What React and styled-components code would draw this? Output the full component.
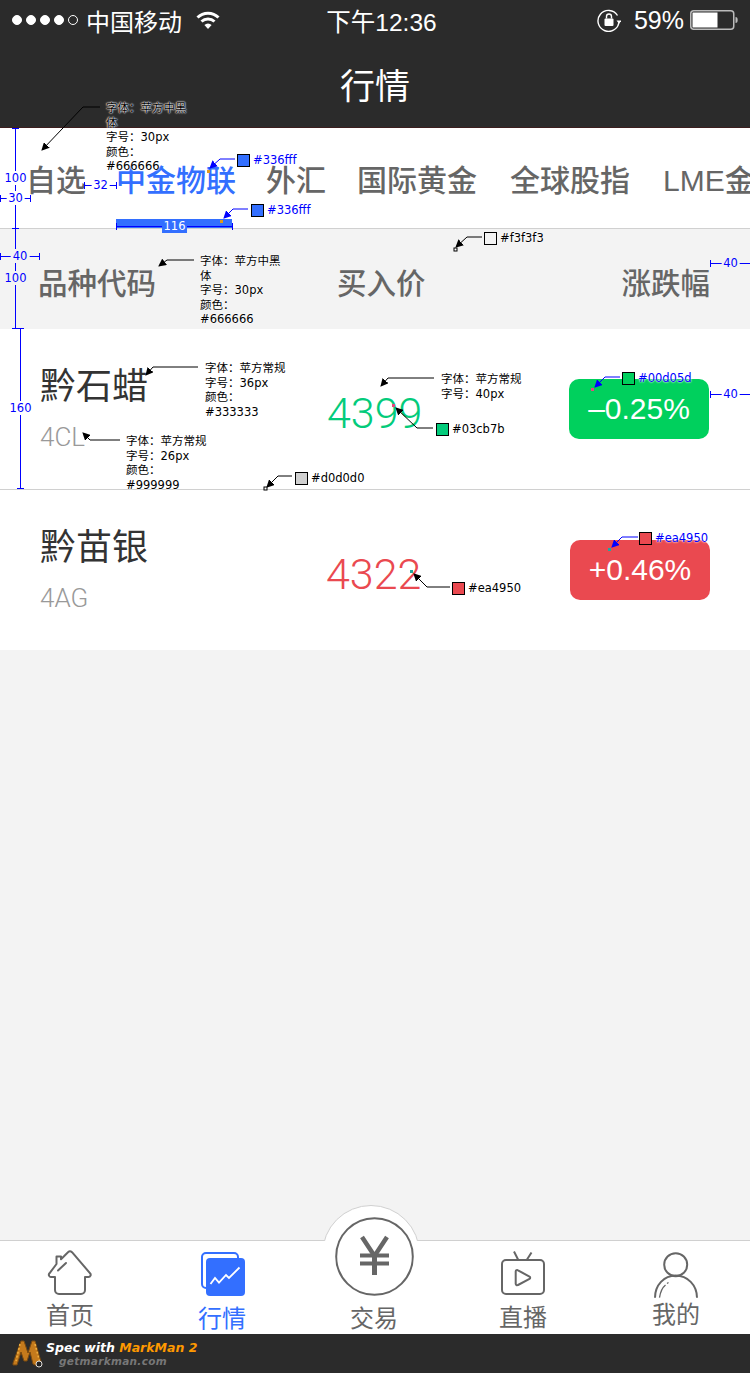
import React from 'react'
import styled, { createGlobalStyle } from 'styled-components'

const SANS = `"Liberation Sans", "Noto Sans CJK SC", sans-serif`
const LIGHT = `Roboto, "Noto Sans CJK SC", sans-serif`
const NOTE = `"DejaVu Sans", "Noto Sans CJK SC", sans-serif`

const Global = createGlobalStyle`
html, body {
  margin: 0;
  padding: 0;
  background: #f3f3f3;
}
`

const Page = styled.div`
position: relative;
width: 750px;
height: 1373px;
overflow: hidden;
display: flex;
flex-direction: column;
font-family: ${SANS};
background: #f3f3f3;
`

const Header = styled.header`
height: 127px;
background: #2b2b2b;
border-bottom: 1px solid #3d1e1e;
color: #fff;
`

const StatusBar = styled.div`
height: 40px;
display: grid;
grid-template-columns: 1fr auto 1fr;
align-items: center;
padding: 0 12px;
font-size: 25px;
`

const StatusGroup = styled.div`
display: flex;
align-items: center;
justify-content: ${({ $end }) => ($end ? 'flex-end' : 'flex-start')};
gap: ${({ $gap }) => $gap}px;
`

const Signal = styled.div`
display: flex;
gap: 4px;
margin-right: 8px;
`

const Dot = styled.span`
width: 10px;
height: 10px;
box-sizing: border-box;
border-radius: 50%;
border: 1px solid #fff;
background: ${({ $on }) => ($on ? '#fff' : 'transparent')};
`

const Carrier = styled.span`
font-size: 24px;
margin-right: 14px;
`

const Clock = styled.span`
margin-left: 13px;
font-size: 24.5px;
`

const Title = styled.h1`
margin: 0;
height: 87px;
display: flex;
align-items: center;
justify-content: center;
font-size: 35px;
font-weight: 400;
padding-bottom: 0;
`

const TabRow = styled.nav`
height: 100px;
background: #fff;
border-bottom: 1px solid #d0d0d0;
display: flex;
padding-left: 26px;
overflow: hidden;
white-space: nowrap;
`

const Tab = styled.div`
position: relative;
flex: none;
padding-top: 36px;
margin-right: ${({ $gap }) => $gap}px;
font-size: 30px;
line-height: 34px;
font-weight: 500;
color: ${({ $active }) => ($active ? '#336fff' : '#666666')};
${({ $active }) =>
  $active &&
  `&::after {
    content: '';
    position: absolute;
    left: 0;
    bottom: 0;
    width: 116px;
    height: 9px;
    background: #336fff;
  }`}
`

const TableHead = styled.div`
height: 100px;
display: grid;
grid-template-columns: 299px 1fr auto;
align-items: center;
padding: 4px 40px 0 38px;
box-sizing: border-box;
font-size: 29.5px;
font-weight: 500;
color: #666666;
`

const Row = styled.div`
height: ${({ $h }) => $h}px;
box-sizing: border-box;
background: #fff;
display: grid;
grid-template-columns: ${({ $nameW }) => $nameW}px 1fr 140px;
align-items: center;
padding: 0 ${({ $right }) => $right}px 0 40px;
border-bottom: ${({ $line }) => ($line ? '1px solid #d0d0d0' : 'none')};
`

const Name = styled.div`
font-size: 36px;
line-height: 40px;
color: #333333;
`

const Code = styled.div`
margin-top: 15px;
font-family: ${LIGHT};
font-weight: 300;
font-size: 26px;
line-height: 30px;
color: #999999;
`

const Price = styled.div`
font-family: ${LIGHT};
font-weight: 300;
font-size: 43px;
color: ${({ $color }) => $color};
padding-top: 7px;
`

const Badge = styled.div`
height: 60px;
border-radius: 10px;
display: flex;
align-items: center;
justify-content: center;
color: #fff;
font-size: 30px;
background: ${({ $color }) => $color};
margin-top: ${({ $top }) => $top}px;
`

const Spacer = styled.div`
flex: 1;
`

const BottomBar = styled.footer`
position: relative;
height: 94px;
box-sizing: border-box;
background: #fff;
border-top: 1px solid #d0d0d0;
display: grid;
grid-template-columns: 140px 164px 140px 158px 148px;
`

const Hump = styled.div`
position: absolute;
left: 322px;
top: -36px;
width: 98px;
height: 36px;
overflow: hidden;
&::before {
  content: '';
  position: absolute;
  left: 0;
  top: 0;
  width: 98px;
  height: 98px;
  box-sizing: border-box;
  border-radius: 50%;
  border: 1px solid #d0d0d0;
  background: #fff;
}
`

const BottomItem = styled.div`
position: relative;
display: flex;
flex-direction: column;
align-items: center;
padding-top: 9px;
font-size: 24px;
line-height: 28px;
color: ${({ $active }) => ($active ? '#336fff' : '#666666')};
`

const IconSlot = styled.div`
height: ${({ $h }) => $h}px;
margin-top: ${({ $top }) => $top || 0}px;
margin-bottom: ${({ $bottom }) => $bottom}px;
display: flex;
`

const MarkBar = styled.div`
height: 39px;
background: #2b2b2b;
display: flex;
align-items: center;
padding-left: 12px;
gap: 2px;
`

const MarkText = styled.div`
font-family: "DejaVu Sans", sans-serif;
font-weight: 700;
font-style: italic;
`

const MarkTop = styled.div`
font-size: 12.5px;
line-height: 15px;
color: #fff;
white-space: nowrap;
span {
  color: #ff9900;
}
`

const MarkUrl = styled.div`
font-size: 10.5px;
line-height: 12px;
color: #777;
padding-left: 13px;
letter-spacing: 0.3px;
`

/* everything MarkMan drew on top of the design */
const Overlay = styled.svg`
position: absolute;
left: 0;
top: 0;
pointer-events: none;
`

const Note = styled.div`
position: absolute;
left: ${({ $x }) => $x}px;
top: ${({ $y }) => $y}px;
width: ${({ $w }) => $w}px;
font-family: ${NOTE};
font-size: 11.5px;
line-height: 14.6px;
color: #000;
text-shadow: 0 0 2px #fff, 0 0 2px #fff, 0 0 1px #fff;
`

const Swatch = styled.div`
position: absolute;
left: ${({ $x }) => $x}px;
top: ${({ $y }) => $y}px;
width: 11px;
height: 11px;
border: 1px solid #000;
background: ${({ $color }) => $color};
`

const SwatchText = styled.div`
position: absolute;
left: ${({ $x }) => $x}px;
top: ${({ $y }) => $y}px;
font-family: ${NOTE};
font-size: 11.5px;
line-height: 14px;
color: ${({ $blue }) => ($blue ? '#0000ff' : '#000')};
text-shadow: 0 0 2px #fff, 0 0 2px #fff;
`

const DimLabel = styled.div`
position: absolute;
left: ${({ $x }) => $x}px;
top: ${({ $y }) => $y}px;
transform: translate(-50%, -50%);
padding: 0 2px;
font-family: ${NOTE};
font-size: 11.5px;
line-height: 14px;
color: ${({ $color }) => $color || '#0000ff'};
background: ${({ $bg }) => $bg || 'transparent'};
`

const tabs = [
  { label: '自选', gap: 30 },
  { label: '中金物联', gap: 30, active: true },
  { label: '外汇', gap: 31 },
  { label: '国际黄金', gap: 33 },
  { label: '全球股指', gap: 33 },
  { label: 'LME金', gap: 0 },
]

const notes = [
  { x: 106, y: 101, w: 86, text: ['字体：苹方中黑', '体', '字号：30px', '颜色：', '#666666'] },
  { x: 200, y: 254, w: 86, text: ['字体：苹方中黑', '体', '字号：30px', '颜色：', '#666666'] },
  { x: 205, y: 361, w: 86, text: ['字体：苹方常规', '字号：36px', '颜色：', '#333333'] },
  { x: 441, y: 372, w: 90, text: ['字体：苹方常规', '字号：40px'] },
  { x: 126, y: 434, w: 90, text: ['字体：苹方常规', '字号：26px', '颜色：', '#999999'] },
]

const swatches = [
  { x: 237, y: 154, color: '#336fff', text: '#336fff', blue: true },
  { x: 251, y: 204, color: '#336fff', text: '#336fff', blue: true },
  { x: 484, y: 232, color: '#f3f3f3', text: '#f3f3f3' },
  { x: 295, y: 472, color: '#d0d0d0', text: '#d0d0d0' },
  { x: 436, y: 423, color: '#03cb7b', text: '#03cb7b' },
  { x: 622, y: 372, color: '#00d05d', text: '#00d05d', blue: true },
  { x: 639, y: 532, color: '#ea4950', text: '#ea4950', blue: true },
  { x: 452, y: 582, color: '#ea4950', text: '#ea4950' },
]

const leaders = [
  { pts: '100,107 83,107 42,150', color: '#000' },
  { pts: '194,260 167,260 159,266', color: '#000' },
  { pts: '198,367 153,367 146,375', color: '#000' },
  { pts: '434,378 388,378 381,386', color: '#000' },
  { pts: '120,440 90,440 83,433', color: '#000' },
  { pts: '482,237 467,237 456,247', color: '#000' },
  { pts: '292,476 278,476 267,487', color: '#000' },
  { pts: '433,428 417,428 396,408', color: '#000' },
  { pts: '450,587 427,587 414,574', color: '#000' },
  { pts: '235,159 220,159 210,168', color: '#0000ff' },
  { pts: '248,209 233,209 224,218', color: '#0000ff' },
  { pts: '620,377 605,377 595,387', color: '#0000ff' },
  { pts: '638,537 622,537 612,547', color: '#0000ff' },
]

const dots = [
  { x: 207, y: 170, color: '#e09a1a' },
  { x: 220, y: 220, color: '#e09a1a' },
  { x: 454, y: 248, color: '#fff', stroke: '#000' },
  { x: 264, y: 487, color: '#fff', stroke: '#000' },
  { x: 392, y: 404, color: '#e8467c' },
  { x: 591, y: 388, color: '#e8467c' },
  { x: 410, y: 570, color: '#1ea8a0' },
  { x: 608, y: 548, color: '#1ea8a0' },
]

const dims = [
  { x1: 15, y1: 128, x2: 15, y2: 228, label: '100', bg: '#fff' },
  { x1: 15, y1: 228, x2: 15, y2: 328, label: '100', bg: '#f3f3f3' },
  { x1: 20, y1: 328, x2: 20, y2: 488, label: '160', bg: '#fff' },
  { x1: 0, y1: 198, x2: 30, y2: 198, label: '30', bg: '#fff' },
  { x1: 84, y1: 185, x2: 116, y2: 185, label: '32', bg: '#fff' },
  { x1: 0, y1: 256, x2: 39, y2: 256, label: '40', bg: '#f3f3f3' },
  { x1: 710, y1: 263, x2: 750, y2: 263, label: '40', bg: '#f3f3f3' },
  { x1: 710, y1: 394, x2: 750, y2: 394, label: '40', bg: '#fff' },
  { x1: 116, y1: 226, x2: 232, y2: 226, label: '116', bg: '#336fff', color: '#fff' },
]

function Wifi() {
  return (
    <svg width="24" height="20" viewBox="0 0 24 20" fill="none" stroke="#fff" strokeWidth="3">
      <path d="M1.5 7.5a15 15 0 0 1 21 0" />
      <path d="M5.5 11.5a9.5 9.5 0 0 1 13 0" />
      <path d="M12 19l-3.6-4a5 5 0 0 1 7.2 0z" fill="#fff" stroke="none" />
    </svg>
  )
}

function RotationLock() {
  return (
    <svg width="24" height="24" viewBox="0 0 24 24" fill="none" stroke="#fff" strokeWidth="1.4">
      <path d="M20.5 7.5A10.5 10.5 0 1 0 22 13" />
      <path d="M19.5 12.5h5l-2.5 3.2z" fill="#fff" stroke="none" />
      <rect x="7.5" y="10.5" width="9" height="7.5" rx="1" fill="#fff" stroke="none" />
      <path d="M9.5 10.5V8.5a2.5 2.5 0 0 1 5 0v2" />
    </svg>
  )
}

function Battery() {
  return (
    <svg width="48" height="20" viewBox="0 0 48 20">
      <rect x="0.75" y="0.75" width="43" height="18.5" rx="3" fill="none" stroke="#bbb" strokeWidth="1.5" />
      <rect x="2.5" y="2.5" width="25" height="15" fill="#fff" />
      <path d="M45.5 7c1.5 0 2.2 1 2.2 3s-.7 3-2.2 3z" fill="#bbb" />
    </svg>
  )
}

function HomeIcon() {
  return (
    <svg width="46" height="46" viewBox="0 0 46 46" fill="none" stroke="#666" strokeWidth="2" strokeLinejoin="round">
      <path d="M8 27v13a4 4 0 0 0 4 4h22a4 4 0 0 0 4-4V27h3.5a2.2 2.2 0 0 0 1.6-3.7L25 2.2a3 3 0 0 0-4 0l-7 7V6.5h-4.5V14L2.5 23.3A2.2 2.2 0 0 0 4.5 27z" />
      <path d="M11 20.5l8-7.500" strokeLinecap="round" />
    </svg>
  )
}

function ChartIcon() {
  return (
    <svg width="45" height="44" viewBox="0 0 45 44" fill="none">
      <path d="M6 36h-0a4 4 0 0 1-4-4V5a4 4 0 0 1 4-4h28a4 4 0 0 1 4 4v1" stroke="#336fff" strokeWidth="2" />
      <rect x="6" y="6" width="39" height="38" rx="4" fill="#336fff" />
      <path d="M10.500 32l4.500-6 4 4.700 7-7.700 3 3 10.500-10.500" stroke="#fff" strokeWidth="1.800" />
    </svg>
  )
}

function TradeIcon() {
  return (
    <svg width="79" height="79" viewBox="0 0 79 79" fill="none" stroke="#666">
      <circle cx="39.500" cy="39.500" r="38.300" strokeWidth="2" />
      <path d="M27 20l12.500 19L52 20" strokeWidth="4.500" />
      <path d="M25 38.500h29M25 46.500h29" strokeWidth="4" />
      <path d="M39.500 38v20" strokeWidth="5" />
    </svg>
  )
}

function TvIcon() {
  return (
    <svg width="44" height="44" viewBox="0 0 44 44" fill="none" stroke="#666" strokeWidth="2" strokeLinejoin="round">
      <rect x="1" y="9" width="42" height="34" rx="4" />
      <path d="M13 0.500l4.300 8.500M30.500 1.500L25.700 9" />
      <path d="M14.700 20.500a1.500 1.500 0 0 1 2.300-1.200l11.500 6.300a1.300 1.300 0 0 1 0 2.300L17 34a1.500 1.500 0 0 1-2.300-1.300z" />
    </svg>
  )
}

function PersonIcon() {
  return (
    <svg width="44" height="46" viewBox="0 0 44 46" fill="none" stroke="#666" strokeWidth="2">
      <circle cx="21.700" cy="12.700" r="11.500" />
      <path d="M1 45.700C1 33 10 23.500 21.700 23.500S43 33 43 45.700" />
      <path d="M5.500 45.700C6.300 40 8.500 35.500 11.500 33M13 31.500l1.500-1" strokeWidth="1.300" />
    </svg>
  )
}

function MarkLogo() {
  return (
    <svg width="32" height="29" viewBox="0 0 32 29">
      <path d="M1 24L9 2l3 0 4 12 4-12 3 0 7 24-3 2-6-3-3-12-3 9h-3l-3-9-4 13-4 0z" fill="#c47a1c" stroke="#7a4a10" strokeWidth="1" />
      <path d="M8 5l-4 17M23 5l5 19" stroke="#f0b040" strokeWidth="1.500" strokeDasharray="2 2" />
      <circle cx="27" cy="25" r="3" fill="#222" stroke="#ddd" strokeWidth="1" />
    </svg>
  )
}

function Annotations() {
  return (
    <>
      <Overlay width="750" height="1373" fill="none">
        <defs>
          <marker id="head" markerWidth="9" markerHeight="8" refX="7" refY="4" orient="auto">
            <path d="M0 0L8 4L0 8z" fill="context-stroke" />
          </marker>
        </defs>
        {dims.map((d, i) => {
          const vertical = d.x1 === d.x2
          return (
            <g key={i} stroke={d.color === '#fff' ? '#0000ff' : '#0000ff'} strokeWidth="1">
              <path d={`M${d.x1 + 0.5} ${d.y1 + 0.5}L${d.x2 + 0.5} ${d.y2 + 0.5}`} />
              {vertical ? (
                <path d={`M${d.x1 - 3} ${d.y1 + 0.5}h7M${d.x2 - 3} ${d.y2 + 0.5}h7`} />
              ) : (
                <path d={`M${d.x1 + 0.5} ${d.y1 - 3}v7M${d.x2 + 0.5} ${d.y2 - 3}v7`} />
              )}
            </g>
          )
        })}
        {leaders.map((l, i) => (
          <polyline key={i} points={l.pts} stroke={l.color} strokeWidth="1" markerEnd="url(#head)" />
        ))}
        {dots.map((d, i) => (
          <rect key={i} x={d.x} y={d.y} width="3" height="3" fill={d.color} stroke={d.stroke || 'none'} />
        ))}
      </Overlay>
      {dims.map((d, i) => (
        <DimLabel key={i} $x={(d.x1 + d.x2) / 2 + 0.5} $y={(d.y1 + d.y2) / 2} $bg={d.bg} $color={d.color}>
          {d.label}
        </DimLabel>
      ))}
      {notes.map((n, i) => (
        <Note key={i} $x={n.x} $y={n.y} $w={n.w}>
          {n.text.map((line, j) => (
            <div key={j}>{line}</div>
          ))}
        </Note>
      ))}
      {swatches.map((s, i) => (
        <React.Fragment key={i}>
          <Swatch $x={s.x} $y={s.y} $color={s.color} />
          <SwatchText $x={s.x + 16} $y={s.y - 1} $blue={s.blue}>
            {s.text}
          </SwatchText>
        </React.Fragment>
      ))}
    </>
  )
}

function App() {
  return (
    <Page>
      <Global />
      <Header>
        <StatusBar>
          <StatusGroup>
            <Signal>
              {[1, 2, 3, 4, 0].map((on, i) => (
                <Dot key={i} $on={on} />
              ))}
            </Signal>
            <Carrier>中国移动</Carrier>
            <Wifi />
          </StatusGroup>
          <Clock>下午12:36</Clock>
          <StatusGroup $end $gap={6}>
            <RotationLock />
            <span style={{ marginLeft: 7 }}>59%</span>
            <Battery />
          </StatusGroup>
        </StatusBar>
        <Title>行情</Title>
      </Header>

      <TabRow>
        {tabs.map((t) => (
          <Tab key={t.label} $active={t.active} $gap={t.gap}>
            {t.label}
          </Tab>
        ))}
      </TabRow>

      <TableHead>
        <span>品种代码</span>
        <span>买入价</span>
        <span>涨跌幅</span>
      </TableHead>

      <Row $h={161} $line $nameW={287} $right={41}>
        <div>
          <Name>黔石蜡</Name>
          <Code>4CL</Code>
        </div>
        <Price $color="#03cb7b">4399</Price>
        <Badge $color="#00d05d" $top={-1}>–0.25%</Badge>
      </Row>
      <Row $h={160} $nameW={286} $right={40}>
        <div>
          <Name>黔苗银</Name>
          <Code>4AG</Code>
        </div>
        <Price $color="#ea4950">4322</Price>
        <Badge $color="#ea4950" $top={0}>+0.46%</Badge>
      </Row>

      <Spacer />

      <BottomBar>
        <Hump />
        <BottomItem>
          <IconSlot $h={46} $bottom={6}><HomeIcon /></IconSlot>
          首页
        </BottomItem>
        <BottomItem $active>
          <IconSlot $h={44} $top={2} $bottom={9}><ChartIcon /></IconSlot>
          行情
        </BottomItem>
        <BottomItem>
          <IconSlot $h={79} $top={-33} $bottom={9}><TradeIcon /></IconSlot>
          交易
        </BottomItem>
        <BottomItem>
          <IconSlot $h={44} $top={1} $bottom={9}><TvIcon /></IconSlot>
          直播
        </BottomItem>
        <BottomItem>
          <IconSlot $h={46} $top={2} $bottom={3}><PersonIcon /></IconSlot>
          我的
        </BottomItem>
      </BottomBar>

      <MarkBar>
        <MarkLogo />
        <MarkText>
          <MarkTop>Spec with <span>MarkMan 2</span></MarkTop>
          <MarkUrl>getmarkman.com</MarkUrl>
        </MarkText>
      </MarkBar>

      <Annotations />
    </Page>
  )
}

export default App
